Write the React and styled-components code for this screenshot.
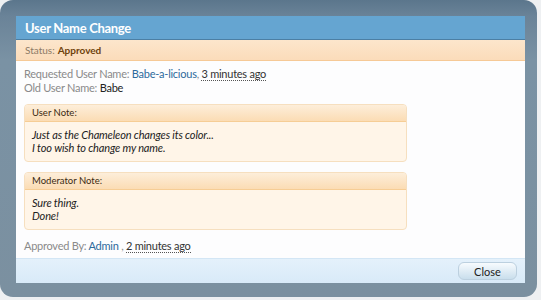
import styled, { createGlobalStyle } from 'styled-components';

const GlobalStyle = createGlobalStyle`
  html, body {
    margin: 0;
    padding: 0;
    background: #eef0f2;
    font-family: Lato, "Liberation Sans", Arial, sans-serif;
  }
`;

const Frame = styled.div`
  width: 537px;
  height: 297px;
  box-sizing: border-box;
  padding: 16px 12px 14px 16px;
  border-radius: 13px;
  background: linear-gradient(to bottom, #5b768c 0px, #6a8398 16px, #7a92a4 60px, #7b90a0 100%);
`;

const Dialog = styled.div`
  width: 509px;
  height: 267px;
  display: flex;
  flex-direction: column;
  background: #fdfdfe;
  overflow: hidden;
`;

const TitleBar = styled.div`
  height: 23px;
  border-bottom: 1px solid #4c7fa4;
  background: #65a5d1;
  color: #fff;
  font-size: 13px;
  font-weight: bold;
  letter-spacing: -0.3px;
  display: flex;
  align-items: center;
  padding-left: 9px;
`;

const StatusBar = styled.div`
  height: 20px;
  border-bottom: 1px solid #f6c996;
  background: linear-gradient(to bottom, #fce6cc, #fbdcba);
  display: flex;
  align-items: center;
  padding-left: 9px;
  font-size: 10px;
  color: #8c7a66;

  strong {
    color: #6e420c;
    margin-left: 3px;
  }
`;

const Content = styled.div`
  flex: 1;
  padding: 6px 8px 0 8px;
  font-size: 11px;
  line-height: 13.5px;
  letter-spacing: -0.25px;
`;

const Line = styled.div`
  color: #8a8a8a;
`;

const Link = styled.span`
  color: #2d6a9c;
`;

const Value = styled.span`
  color: #222;
`;

const Time = styled.span`
  color: #333;
  border-bottom: 1px dotted #555;
`;

const NoteBox = styled.div`
  width: 383px;
  box-sizing: border-box;
  margin-top: 10px;
  border: 1px solid #f6dfbf;
  border-radius: 4px;
  background: #fff5e8;
  overflow: hidden;
`;

const NoteHeader = styled.div`
  height: 16px;
  border-bottom: 1px solid #f6cd95;
  background: linear-gradient(to bottom, #fdeeda, #fbdcb4);
  display: flex;
  align-items: center;
  padding-left: 7px;
  font-size: 9.5px;
  letter-spacing: 0;
  color: #3b2a12;
`;

const NoteBody = styled.div`
  padding: 6px 7px 7px 7px;
  font-style: italic;
  color: #222;
  font-size: 11px;
  line-height: 13px;
  letter-spacing: -0.15px;
`;

const Approved = styled(Line)`
  margin-top: 9px;
`;

const Footer = styled.div`
  height: 24px;
  border-top: 1px solid #d3e6f5;
  background: linear-gradient(to bottom, #e4f1fb, #d8eaf8);
  display: flex;
  justify-content: flex-end;
  align-items: center;
  padding-right: 8px;
`;

const Button = styled.button`
  width: 59px;
  height: 18px;
  padding: 0;
  border: 1px solid #bcd0df;
  border-radius: 6px;
  background: linear-gradient(to bottom, #f7fbfe, #c9deec);
  font-family: inherit;
  font-size: 11px;
  color: #222;
  cursor: pointer;
`;

const Note = ({ title, lines }) => (
  <NoteBox>
    <NoteHeader>{title}</NoteHeader>
    <NoteBody>
      {lines.map((l) => (
        <div key={l}>{l}</div>
      ))}
    </NoteBody>
  </NoteBox>
);

export default function App() {
  return (
    <>
      <GlobalStyle />
      <Frame>
        <Dialog>
          <TitleBar>User Name Change</TitleBar>
          <StatusBar>
            Status:<strong>Approved</strong>
          </StatusBar>
          <Content>
            <Line>
              Requested User Name: <Link>Babe-a-licious</Link>, <Time>3 minutes ago</Time>
            </Line>
            <Line>
              Old User Name: <Value>Babe</Value>
            </Line>
            <Note
              title="User Note:"
              lines={['Just as the Chameleon changes its color...', 'I too wish to change my name.']}
            />
            <Note title="Moderator Note:" lines={['Sure thing.', 'Done!']} />
            <Approved>
              Approved By: <Link>Admin</Link> , <Time>2 minutes ago</Time>
            </Approved>
          </Content>
          <Footer>
            <Button>Close</Button>
          </Footer>
        </Dialog>
      </Frame>
    </>
  );
}
